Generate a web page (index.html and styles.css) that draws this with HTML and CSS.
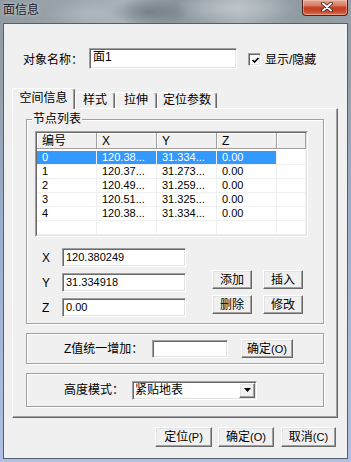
FILE: index.html
```html
<!DOCTYPE html>
<html lang="zh-CN">
<head>
<meta charset="utf-8">
<title>面信息</title>
<link rel="stylesheet" href="styles.css">
</head>
<body>
<div class="window">
  <div class="titlebar">
    <span class="title">面信息</span>
    <div class="close">
      <svg width="12" height="10" viewBox="0 0 12 10"><path d="M2 1.5L10 8.5M10 1.5L2 8.5" stroke="#3b1a12" stroke-width="3.6" stroke-linecap="round"/><path d="M2 1.5L10 8.5M10 1.5L2 8.5" stroke="#fff" stroke-width="2" stroke-linecap="round"/></svg>
    </div>
  </div>
  <div class="client">
    <div class="name-row">
      <span class="name-lbl">对象名称：</span>
      <div class="edit name-edit">面1</div>
      <div class="checkbox"><svg width="9" height="9" viewBox="0 0 9 9"><polyline points="1.5,4 3.5,6 7.5,2" fill="none" stroke="#000" stroke-width="1.7"/></svg></div>
      <span class="check-lbl">显示/隐藏</span>
    </div>
    <div class="tabctl">
      <div class="tabs">
        <div class="tab active w1">空间信息</div>
        <div class="tab w2">样式</div>
        <div class="tab w3">拉伸</div>
        <div class="tab w4">定位参数</div>
      </div>
      <div class="panel">
        <div class="group nodes">
          <span class="legend">节点列表</span>
          <div class="list"><div class="list-in">
            <div class="lv-head">
              <div class="hc">编号</div><div class="hc">X</div><div class="hc">Y</div><div class="hc">Z</div><div class="hc last"></div>
            </div>
            <div class="lv-body">
              <div class="lv-row sel"><div class="c">0</div><div class="c">120.38...</div><div class="c">31.334...</div><div class="c">0.00</div><div class="c last"></div></div>
              <div class="lv-row"><div class="c">1</div><div class="c">120.37...</div><div class="c">31.273...</div><div class="c">0.00</div><div class="c last"></div></div>
              <div class="lv-row"><div class="c">2</div><div class="c">120.49...</div><div class="c">31.259...</div><div class="c">0.00</div><div class="c last"></div></div>
              <div class="lv-row"><div class="c">3</div><div class="c">120.51...</div><div class="c">31.325...</div><div class="c">0.00</div><div class="c last"></div></div>
              <div class="lv-row"><div class="c">4</div><div class="c">120.38...</div><div class="c">31.334...</div><div class="c">0.00</div><div class="c last"></div></div>
              <div class="lv-row"><div class="c"></div><div class="c"></div><div class="c"></div><div class="c"></div><div class="c last"></div></div>
              <div class="lv-row"><div class="c"></div><div class="c"></div><div class="c"></div><div class="c"></div><div class="c last"></div></div>
            </div>
          </div></div>
          <div class="coords">
            <div class="xyz">
              <div class="xyz-row"><span class="axis">X</span><div class="edit coord">120.380249</div></div>
              <div class="xyz-row"><span class="axis">Y</span><div class="edit coord">31.334918</div></div>
              <div class="xyz-row"><span class="axis">Z</span><div class="edit coord">0.00</div></div>
            </div>
            <div class="btn-grid">
              <div class="btn">添加</div><div class="btn">插入</div>
              <div class="btn">删除</div><div class="btn">修改</div>
            </div>
          </div>
        </div>
        <div class="group zgroup">
          <span class="zlbl">Z值统一增加：</span>
          <div class="edit zedit"></div>
          <div class="btn zbtn">确定<span class="lat">(O)</span></div>
        </div>
        <div class="group hgroup">
          <span class="hlbl">高度模式：</span>
          <div class="combo">
            <span class="combo-text">紧贴地表</span>
            <div class="combo-btn"><svg width="7" height="4" viewBox="0 0 7 4"><polygon points="0,0 7,0 3.5,4" fill="#000"/></svg></div>
          </div>
        </div>
      </div>
    </div>
    <div class="footer">
      <div class="btn fb1">定位<span class="lat">(P)</span></div>
      <div class="btn fb2">确定<span class="lat">(O)</span></div>
      <div class="btn fb3">取消<span class="lat">(C)</span></div>
    </div>
  </div>
</div>
</body>
</html>
```
FILE: styles.css
```css
* { box-sizing: border-box; }
html, body { margin: 0; padding: 0; }
body {
  width: 351px; height: 462px; overflow: hidden;
  font-family: "Liberation Sans", "Noto Sans CJK SC", sans-serif;
  font-size: 12px; line-height: 14px; color: #000;
  background: linear-gradient(180deg, #8e989e 0, #94a0a9 80px, #9badcc 220px, #b0c0e2 462px);
}
.window { width: 351px; height: 462px; display: flex; flex-direction: column; }

.titlebar {
  flex: none; height: 23px; display: flex; align-items: flex-start;
  background:
    radial-gradient(ellipse 40px 14px at 150px 12px, rgba(100,112,120,.7), transparent),
    radial-gradient(ellipse 60px 16px at 235px 8px, rgba(200,207,212,.7), transparent),
    radial-gradient(ellipse 40px 14px at 90px 14px, rgba(185,193,199,.6), transparent),
    linear-gradient(90deg, #909aa0 0, #9aa4aa 20%, #a9b2b8 35%, #8a959c 50%, #a7b0b6 68%, #8f9aa1 85%, #959fa5 100%);
}
.title {
  margin: 2px 0 0 3px;
  font-family: "Noto Sans CJK SC", sans-serif; font-size: 12px; line-height: 14px;
  color: #1a1a30;
  text-shadow: 0 0 3px rgba(255,255,255,.5), 0 0 6px rgba(255,255,255,.35);
}
.close {
  margin: 0 3px 0 auto; width: 46px; height: 16px;
  border: 1px solid #4e2219; border-top: none; border-radius: 0 0 4px 4px;
  background: linear-gradient(180deg, #e6a896 0, #d87c64 35%, #c23d22 52%, #c8492d 75%, #dc7356 100%);
  box-shadow: inset 0 0 0 1px rgba(255,210,195,.45);
  display: flex; align-items: center; justify-content: center;
}
.close svg { margin-left: 3px; margin-top: -2px; }

.client {
  flex: none; margin-left: 3px; width: 345px; height: 436px;
  border: 1px solid #56606a; background: #f0f0f0;
  display: flex; flex-direction: column;
}

.edit {
  background: #fff;
  border: 1px solid; border-color: #a0a0a0 #fff #fff #a0a0a0;
  box-shadow: inset 1px 1px 0 #696969, inset -1px -1px 0 #e3e3e3;
}
.btn {
  display: flex; align-items: center; justify-content: center;
  background: #f0f0f0;
  border: 1px solid; border-color: #fff #696969 #696969 #fff;
  box-shadow: inset -1px -1px 0 #a0a0a0, inset 1px 1px 0 #e3e3e3;
  font-size: 12px; line-height: 14px;
}
.lat { font-size: 11px; }

.name-row { display: flex; align-items: center; height: 21px; margin: 24px 0 0 19px; }
.name-lbl { width: 66px; padding-top: 2px; }
.name-edit { width: 148px; height: 21px; padding: 1px 0 0 3px; line-height: 14px; }
.checkbox {
  width: 13px; height: 13px; margin: 2px 0 0 11px; background: #fff;
  border: 1px solid; border-color: #a0a0a0 #fff #fff #a0a0a0;
  box-shadow: inset 1px 1px 0 #696969, inset -1px -1px 0 #e3e3e3;
  display: flex; align-items: center; justify-content: center;
}
.checkbox svg { margin: 1px 0 0 1px; }
.check-lbl { margin-left: 4px; padding-top: 2px; }

.tabctl { margin: 19px 0 0 8px; width: 326px; }
.tabs { display: flex; align-items: flex-end; height: 20px; }
.tab {
  height: 16px; background: #f0f0f0;
  border-top: 1px solid #fff; border-left: 1px solid #fff; border-right: 1px solid #696969;
  box-shadow: inset -1px 0 0 #a0a0a0;
  border-radius: 3px 3px 0 0;
  text-align: center; line-height: 14px;
}
.tab.active { height: 21px; margin-bottom: -1px; position: relative; z-index: 1; padding-top: 2px; }
.w1 { width: 63px; }
.w2 { width: 40px; }
.w3 { width: 42px; }
.w4 { width: 60px; }
.panel {
  height: 310px;
  border: 1px solid; border-color: #fff #696969 #696969 #fff;
  box-shadow: inset -1px -1px 0 #a0a0a0;
  padding: 10px 0 0 13px;
}

.group {
  width: 298px;
  border: 1px solid #a0a0a0;
  box-shadow: inset 1px 1px 0 #fff, 1px 1px 0 #fff;
}
.nodes { padding: 0 0 6px 0; }
.legend {
  display: block; width: max-content; margin: -8px 0 0 5px; padding: 0 1px;
  background: #f0f0f0; line-height: 14px;
}

.list {
  margin: 5px 0 0 8px; width: 273px; height: 106px;
  border: 1px solid; border-color: #a0a0a0 #fff #fff #a0a0a0;
}
.list-in {
  height: 100%; overflow: hidden; background: #fff;
  border: 1px solid; border-color: #696969 #e3e3e3 #e3e3e3 #696969;
}
.lv-head { display: flex; height: 16px; }
.hc {
  width: 60px; flex: none; height: 16px; background: #f0f0f0;
  border-right: 1px solid #a0a0a0; border-bottom: 1px solid #a0a0a0;
  box-shadow: inset 1px 1px 0 #fff;
  padding: 1px 0 0 5px; line-height: 14px;
}
.hc.last, .c.last { width: 29px; }
.lv-body { padding-top: 2px; }
.lv-row { display: flex; height: 14px; }
.c {
  width: 60px; flex: none; height: 14px;
  border-right: 1px solid #f0f0f0; border-bottom: 1px solid #f0f0f0;
  padding-left: 5px; font-size: 11px; line-height: 13px;
}
.sel .c:not(.last) { background: #3399ff; color: #fff; }

.coords { display: flex; margin-top: 11px; padding-left: 15px; }
.xyz { display: flex; flex-direction: column; gap: 6px; }
.xyz-row { display: flex; align-items: center; height: 19px; }
.axis { width: 20px; font-size: 12px; }
.coord { width: 124px; height: 19px; padding: 1px 0 0 3px; font-size: 11px; line-height: 15px; }
.btn-grid {
  display: grid; grid-template-columns: 40px 40px; grid-auto-rows: 19px;
  column-gap: 11px; row-gap: 6px; margin: 22px 0 0 26px;
}

.zgroup { margin-top: 9px; height: 31px; display: flex; align-items: center; padding-left: 37px; }
.zlbl { width: 88px; }
.zedit { width: 76px; height: 18px; }
.zbtn { width: 52px; height: 19px; margin-left: 13px; }

.hgroup { margin-top: 9px; height: 34px; display: flex; align-items: center; padding-left: 37px; }
.hlbl { width: 68px; }
.combo {
  width: 125px; height: 19px; display: flex; background: #fff;
  border: 1px solid; border-color: #a0a0a0 #fff #fff #a0a0a0;
  box-shadow: inset 1px 1px 0 #696969, inset -1px -1px 0 #e3e3e3;
  padding: 1px;
}
.combo-text { flex: 1; padding-left: 1px; line-height: 15px; }
.combo-btn {
  width: 16px; display: flex; align-items: center; justify-content: center;
  background: #f0f0f0;
  border: 1px solid; border-color: #fff #696969 #696969 #fff;
  box-shadow: inset -1px -1px 0 #a0a0a0, inset 1px 1px 0 #e3e3e3;
}

.footer { display: flex; justify-content: flex-end; margin-top: 9px; padding-right: 11px; }
.footer .btn { height: 20px; }
.fb1 { width: 57px; }
.fb2 { width: 56px; margin-left: 6px; }
.fb3 { width: 55px; margin-left: 7px; }
```
